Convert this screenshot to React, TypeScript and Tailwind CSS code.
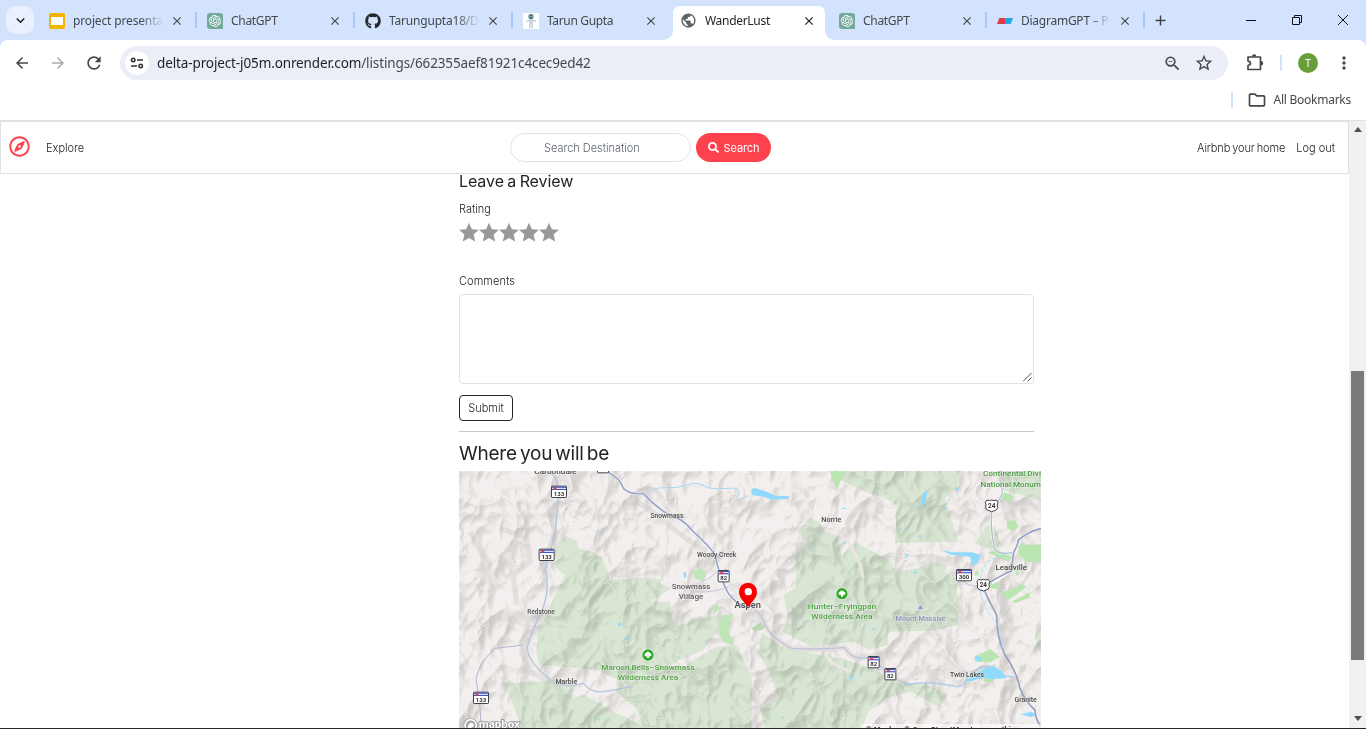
import type { ReactNode } from "react";
import {
  MdArrowBack,
  MdArrowForward,
  MdClose,
  MdMoreVert,
  MdOutlineFolder,
  MdOutlineZoomOut,
  MdRefresh,
  MdStarBorder,
  MdAdd,
  MdKeyboardArrowDown,
  MdPublic,
} from "react-icons/md";
import { FaGithub, FaRegCompass, FaSearch } from "react-icons/fa";
import { SiOpenai } from "react-icons/si";

const ui = "font-['Noto_Sans','Open_Sans',sans-serif]";

function OpenAiIcon() {
  return (
    <span className="flex size-4 items-center justify-center rounded-[3px] rounded-br-none bg-[#74aa9c] text-white">
      <SiOpenai size={12} />
    </span>
  );
}

function SlidesIcon() {
  return (
    <span className="flex size-4 items-center justify-center rounded-[2px] bg-[#f5b400]">
      <span className="h-2 w-3 bg-white" />
    </span>
  );
}

function RobotIcon() {
  return (
    <svg width="16" height="16" viewBox="0 0 16 16">
      <rect width="16" height="16" fill="#fff" />
      <circle cx="8" cy="3.5" r="2.6" fill="#4b7880" />
      <circle cx="7" cy="3.4" r=".7" fill="#9bd0d8" />
      <circle cx="9.2" cy="3.4" r=".7" fill="#9bd0d8" />
      <path d="M6.6 6.8h2.8l-.3 3.400H6.900z" fill="#dfe4e8" stroke="#a9b5bd" strokeWidth=".8" />
      <path d="M6.900 10.600v4.600M9.100 10.600v4.600M6.200 7.400 3.400 8.200M9.800 7.400l2.800.8" stroke="#a9b5bd" fill="none" />
    </svg>
  );
}

function EraserIcon() {
  return (
    <svg width="16" height="16" viewBox="0 0 16 16">
      <path d="M2.3 5H8v6H0z" fill="#dc3c46" />
      <path d="M8 5h8l-2.3 6H8z" fill="#22a7e0" />
    </svg>
  );
}

function ExtensionIcon() {
  return (
    <svg className="ml-[18px] shrink-0" width="18" height="18" viewBox="0 0 18 18">
      <path d="M2 3h12.500v12.500H2v-4q2.500-.5 2.500-2.200T2 7.100z" fill="none" stroke="currentColor" strokeWidth="1.700" strokeLinejoin="round" />
      <path d="M6 2.500a2.200 2.200 0 0 1 4.400 0zM15 7.100a2.200 2.200 0 0 1 0 4.400z" fill="currentColor" />
    </svg>
  );
}

type TabProps = {
  icon: ReactNode;
  title: string;
  active?: boolean;
  divider?: boolean;
  fade?: boolean;
  tracking?: string;
};

function Tab({ icon, title, active, divider, fade, tracking = "" }: TabProps) {
  return (
    <div className={`relative flex h-[34px] w-[158px] shrink-0 items-center pb-[5px] pl-[10px] ${active ? "text-[#1f1f1f]" : "text-[#45474a]"}`}>
      {active && (
        <svg className="absolute -left-[9px] top-0" width="170" height="34" viewBox="0 0 170 34">
          <path d="M0 34C7 34 11 30 11 24V8Q11 0 19 0H155Q163 0 163 8V24C163 30 167 34 174 34Z" fill="#fff" />
        </svg>
      )}
      <span className="relative">{icon}</span>
      <span className={`relative ml-2 w-[89px] whitespace-nowrap text-[12px] font-[450] leading-[18px] ${tracking} ${fade ? "[mask-image:linear-gradient(to_right,black_75%,transparent_102%)]" : ""}`}>
        {title}
      </span>
      <MdClose size={14} className="relative ml-[8px]" />
      {divider && <span className="absolute right-0 top-[6px] h-4 w-[2px] bg-[#a8c7fa]" />}
    </div>
  );
}

function TabStrip() {
  return (
    <div className="flex h-10 bg-[#d3e3fd] pt-[6px]">
      <div className="ml-[6px] mr-[5px] flex size-7 shrink-0 items-center justify-center rounded-[10px] bg-[#e9f1fe]">
        <MdKeyboardArrowDown size={17} className="text-[#1f1f1f]" />
      </div>
      <Tab icon={<SlidesIcon />} title="project presenta" divider fade tracking="tracking-[-0.15px]" />
      <Tab icon={<OpenAiIcon />} title="ChatGPT" divider tracking="tracking-[-0.3px]" />
      <Tab icon={<FaGithub size={16} className="text-[#24292f]" />} title="Tarungupta18/D" divider fade tracking="tracking-[-0.2px]" />
      <Tab icon={<RobotIcon />} title="Tarun Gupta" tracking="tracking-[-0.35px]" />
      <Tab icon={<MdPublic size={17} className="-ml-px text-[#5f6368]" />} title="WanderLust" active tracking="tracking-[-0.3px]" />
      <Tab icon={<OpenAiIcon />} title="ChatGPT" divider tracking="tracking-[-0.3px]" />
      <Tab icon={<EraserIcon />} title="DiagramGPT – P" divider fade tracking="tracking-[-0.25px]" />
      <MdAdd size={17} className="ml-[7px] mt-[6px] shrink-0 text-[#3c4043]" />
      <svg className="ml-auto mr-[16px] mt-[8px] shrink-0" width="104" height="12" viewBox="0 0 104 12" fill="none" stroke="#111" strokeWidth="1">
        <path d="M0 6.5h10" />
        <path d="M46.5 3.5h7v7h-7zM48.5 3.5v-2h7v7h-2" />
        <path d="m92 1 10 10M102 1 92 11" />
      </svg>
    </div>
  );
}

function Toolbar() {
  return (
    <div className="bg-[#d3e3fd]">
      <div className="flex h-[46px] items-center rounded-t-lg bg-white text-[#45474a]">
        <MdArrowBack size={18} className="ml-[13px]" />
        <MdArrowForward size={18} className="ml-[18px] text-[#a9abad]" />
        <MdRefresh size={20} className="ml-[17px]" />
        <div className="ml-[16px] flex h-[34px] w-[1108px] items-center rounded-full bg-[#ebeef7] pl-[5px]">
          <span className="flex size-6 items-center justify-center rounded-full bg-white">
            <svg width="14" height="12" viewBox="0 0 14 12" fill="none" stroke="#303134" strokeWidth="1.6">
              <circle cx="3.2" cy="3" r="1.7" />
              <path d="M7 3h6M1 9h6" />
              <circle cx="10.7" cy="9" r="1.7" />
            </svg>
          </span>
          <span className="ml-[8px] whitespace-nowrap text-[13.5px] leading-5 tracking-[-0.12px] text-[#45474a]">
            <span className="text-[#1f1f1f]">delta-project-j05m.onrender.com</span>/listings/662355aef81921c4cec9ed42
          </span>
          <MdOutlineZoomOut size={19} className="ml-auto" />
          <MdStarBorder size={20} className="ml-[12px] mr-[14px]" />
        </div>
        <ExtensionIcon />
        <span className="ml-[16px] h-4 w-[2px] bg-[#d3e3fd]" />
        <span className="ml-[16px] flex size-5 items-center justify-center rounded-full bg-[#689f38] text-[10px] text-white">T</span>
        <MdMoreVert size={20} className="ml-[16px]" />
      </div>
    </div>
  );
}

function BookmarksBar() {
  return (
    <div className="flex h-[35px] items-center justify-end border-b border-[#dfe1e5] bg-white pb-[7px] pr-[15px] text-[#45474a]">
      <span className="h-4 w-[2px] bg-[#d3e3fd]" />
      <MdOutlineFolder size={20} className="ml-[14px]" />
      <span className="ml-[6px] whitespace-nowrap text-[12px] font-[450] tracking-[-0.25px]">All Bookmarks</span>
    </div>
  );
}

function Navbar() {
  return (
    <header className="flex h-[53px] items-center border border-[#dee2e6] text-[11px] text-[#222]">
      <FaRegCompass size={21} className="-mt-[3px] ml-[8px] shrink-0 text-[#fe424d]" />
      <span className="ml-[16px] w-[464px] pt-[2px]">Explore</span>
      <span className="flex h-[29px] w-[181px] items-center rounded-full border border-[#dee2e6] pl-[33px] pt-px tracking-[-0.02px] text-[#5c646b]">
        Search Destination
      </span>
      <span className="ml-[5px] flex h-[29px] w-[75px] items-center justify-center gap-[5px] rounded-full bg-[#fe424d] font-normal text-white">
        <FaSearch size={11} />
        <span className="pt-px tracking-[-0.1px]">Search</span>
      </span>
      <span className="ml-auto whitespace-nowrap pt-[2px] tracking-[-0.1px] [word-spacing:-1px]">Airbnb your home</span>
      <span className="ml-[11px] mr-[13px] whitespace-nowrap pt-[2px]">Log out</span>
    </header>
  );
}

function Stars() {
  return (
    <svg className="mt-[5px] block" width="100" height="20" viewBox="0 0 100 20" fill="#999">
      {[0, 20, 40, 60, 80].map((x) => (
        <path key={x} transform={`translate(${x} .5)`} d="M10 .2l2.900 6.500 7 .6-5.300 4.700 1.700 7.100L10 15.500 3.700 19.100l1.700-7.100L.1 7.300l7-.6z" />
      ))}
    </svg>
  );
}

type LabelProps = { x: number; y: number; w: number; text: string; size?: number; fill?: string };

function MapLabel({ x, y, w, text, size = 21, fill = "#4a4a4d" }: LabelProps) {
  return (
    <text x={x} y={y} textLength={w} lengthAdjust="spacingAndGlyphs" textAnchor="middle" fontSize={size} fill={fill} stroke="#f6f3f2" strokeWidth="3" strokeOpacity=".6" paintOrder="stroke" fontWeight="500">
      {text}
    </text>
  );
}

function StateShield({ x, y, n }: { x: number; y: number; n: string }) {
  const w = n.length > 2 ? 48 : 36;
  return (
    <g transform={`translate(${x - w / 2} ${y - 18})`}>
      <rect x="1.500" y="1.500" width={w - 3} height="34" rx="2" fill="#fff" stroke="#3d3f4a" strokeWidth="3" />
      <rect x="3" y="3" width={w - 6} height="10" fill="#4257c6" />
      <path d={`M3 8h${w - 6}`} stroke="#fff" strokeWidth="3" />
      <circle cx="12" cy="8" r="4.500" fill="#e4443c" />
      <text x={w / 2} y="31" textAnchor="middle" fontSize="18" fontWeight="700" fill="#333">{n}</text>
    </g>
  );
}

function UsShield({ x, y }: { x: number; y: number }) {
  return (
    <g transform={`translate(${x} ${y})`}>
      <path d="M-14-17Q-7-13 0-17 7-13 14-17L19-10Q15-2 18 6 16 14 8 15L0 18-8 15Q-16 14-18 6-15-2-19-10Z" fill="#fff" stroke="#3d3f4a" strokeWidth="3" />
      <text y="7" textAnchor="middle" fontSize="19" fontWeight="700" fill="#333">24</text>
    </g>
  );
}

function ParkPin({ x, y }: { x: number; y: number }) {
  return (
    <g transform={`translate(${x} ${y})`}>
      <circle r="19" fill="#fff" opacity=".7" />
      <circle r="17" fill="#2eab27" />
      <path d="M-10 2A6 6 0 0 1-6-6 7 7 0 0 1 6-6 6 6 0 0 1 10 2Q6 5 3 4V9H-3V4Q-6 5-10 2Z" fill="#fff" />
    </g>
  );
}

function MapView() {
  return (
    <svg className="block font-['Roboto','Noto_Sans',sans-serif]" width="582" height="257" viewBox="459 471 582 257">
      <defs>
        <filter id="relief" x="0" y="0" width="100%" height="100%" colorInterpolationFilters="sRGB">
          <feTurbulence type="turbulence" baseFrequency="0.024 0.018" numOctaves="3" seed="11" result="n" />
          <feColorMatrix in="n" type="matrix" values="0 0 0 0 0  0 0 0 0 0  0 0 0 0 0  -1.300 0 0 0 1" result="h" />
          <feDiffuseLighting in="h" surfaceScale="10" lightingColor="#fff" result="l">
            <feDistantLight azimuth="225" elevation="58" />
          </feDiffuseLighting>
          <feColorMatrix in="l" type="matrix" values=".19 0 0 0 .835  0 .19 0 0 .835  0 0 .19 0 .832  0 0 0 0 1" />
        </filter>
      </defs>
      <rect x="459" y="471" width="582" height="257" fill="#f3efee" />

      <g fill="#d9e6d4">
        <g transform="translate(450 465) scale(.33333)">
          <path d="M330 225 350 213 380 228 385 250 430 262 455 280 475 320 478 345 590 338 630 342 632 358 665 370 600 410 660 410 665 450 680 485 730 465 800 450 810 480 790 510 760 555 690 585 650 610 500 642 440 615 350 605 270 600 258 560 265 500 320 380 345 330 318 310 316 260Z" />
          <path d="M160 655 370 645 365 700 400 690 450 715 500 745 545 765 590 792H215L190 720Z" />
          <path d="M500 640 600 600 700 610 720 590 800 545 860 540 885 600 905 640V792H580L560 730 500 682Z" />
        </g>
        <g transform="translate(745 465) scale(.33333)">
          <path d="M250 18H640L635 70 600 100 640 230 450 235 455 120 420 100 360 80 290 45Z" />
          <path d="M160 200 195 155 230 180 240 200 275 210 290 270 330 230 440 290 450 320 520 310 560 290 605 300 600 320 635 345 640 480 560 497 430 500 430 540 370 555 330 530 200 545 110 500 130 460 115 390 150 370 155 310 150 280 185 230Z" />
          <path d="M50 500 100 540 200 565 290 580 380 610 430 640 560 665 610 690 580 725 500 680 420 700 370 740 350 792H60L45 730 100 700 80 640 40 560Z" />
          <path d="M765 18H888V105L830 90 775 75ZM690 235 725 180 750 185 765 230 755 262ZM888 480 872 510 878 550 888 570Z" />
        </g>
      </g>

      <rect x="459" y="471" width="582" height="257" filter="url(#relief)" className="mix-blend-multiply" />

      <g transform="translate(450 465) scale(.33333)" fill="none" strokeLinejoin="round">
        <g stroke="#c9c6c2" strokeWidth="16" opacity=".35">
          <path d="M150 190 230 220 240 290 190 330 200 420M235 460 215 560 240 620 300 650M540 95 620 150 700 215 770 260M60 200 120 300 90 380" />
        </g>
        <g fill="#c0e5b8">
          <path d="M725 318 755 310 770 325 760 350 735 340ZM808 470 820 450 850 448 845 465 835 500 852 540 820 532 805 505ZM792 425 800 414 808 430 790 452ZM478 30 498 34 490 45Z" />
        </g>
        <g fill="#92d9fb">
          <path d="m700 322 7 0 2 14-7 3ZM505 474l8 0-1 9-8-2ZM526 512l10 4-4 8-8-3ZM454 203l6 2-3 5ZM680 575h9v5h-9ZM441 760h8v5h-8Z" />
        </g>
        <path d="M590 85Q620 65 650 68T710 60 760 62 830 70 865 90 895 92" stroke="#a7d8f4" strokeWidth="3" />
        <path d="M300 22Q328 40 325 90T315 210Q300 260 285 315 295 350 290 385T265 460 230 550Q240 595 290 635T400 655Q425 685 460 680T545 665" stroke="#b2c4df" strokeWidth="4" />
        <path d="M92 790Q95 740 78 640 90 590 135 550 180 545 220 540" stroke="#b0b7d1" strokeWidth="3" />
        <path d="M474 22Q510 40 520 70 540 90 580 85 610 120 650 145 700 160 730 200 780 245 795 270 810 340 835 385 860 420 895 430" stroke="#fff" strokeWidth="8" />
        <path d="M474 22Q510 40 520 70 540 90 580 85 610 120 650 145 700 160 730 200 780 245 795 270 810 340 835 385 860 420 895 430" stroke="#9ba3c7" strokeWidth="5" />
        <path d="M740 355Q770 350 800 320M735 380Q790 385 835 365" stroke="#c3c7dc" strokeWidth="3" />
      </g>

      <g transform="translate(745 465) scale(.33333)" fill="none" strokeLinejoin="round">
        <g fill="#b9e6b0">
          <path d="M255 22 300 18 290 40 275 75ZM770 92 780 82 808 95 800 108 770 105ZM785 168 810 165 822 185 805 198 788 190ZM820 240 888 238V290L850 292 820 270ZM728 262 760 255 800 275 790 290ZM728 350 760 352 765 375 740 370ZM768 385 830 357 845 366 790 405ZM800 410 858 380 850 400 812 414ZM690 575 735 552 765 575 735 592 700 590ZM715 640 750 640 745 652 715 650ZM812 310 825 325 815 333ZM690 320 700 315 700 332 688 330Z" />
          <path fill="#bad9b2" d="M20 488 50 470 65 482 50 496 25 497Z" />
        </g>
        <g fill="#92dafc">
          <path d="M18 75 28 68 70 82 90 92 135 94 130 101 80 104 55 95 20 90ZM548 76 542 110 530 125 526 118 536 82ZM588 255 620 262 680 262 708 270 700 292 684 304 674 275 620 270ZM690 575 700 572 712 580 705 590 690 588ZM710 615 745 603 770 618 785 640 740 642 715 638 680 648 655 650 680 635ZM825 748 860 740 873 750 860 757ZM478 263 490 270 485 278ZM505 320h9v7h-9ZM295 228l8 4-3 7ZM315 634h9v9h-9ZM383 489h7v6h-7ZM522 210h7v8h-7ZM465 190h6v5h-6ZM596 126h6v5h-6ZM108 755h10v5h-10ZM292 128h9v4h-9ZM635 68h7v7h-7Z" />
        </g>
        <path d="M0 430Q50 435 60 480 80 520 140 550 210 555 300 548 320 590 380 575 430 635 480 655" stroke="#ddd9d6" strokeWidth="18" opacity=".6" />
        <path d="M275 200Q340 250 355 340M240 560Q250 600 320 620" stroke="#ebe6e3" strokeWidth="8" />
        <path d="M30 435Q55 455 60 480 80 520 140 550 210 555 300 548 320 590 380 575 430 635 480 655" stroke="#bdc3da" strokeWidth="4" />
        <path d="M480 660Q550 645 635 665 660 660 660 650 690 600 740 605M780 632 810 638" stroke="#a6cdea" strokeWidth="4" />
        <path d="M765 45Q775 80 770 90L740 140Q735 180 748 250 760 270 800 263M740 355 800 318 805 265Q820 235 820 225 850 200 888 190" stroke="#fff" strokeWidth="7" />
        <path d="M765 45Q775 80 770 90L740 140Q735 180 748 250 760 270 800 263" stroke="#b3b8d3" strokeWidth="4" />
        <path d="M735 352Q770 330 800 318L805 265Q820 235 820 225 850 200 888 190M718 375Q730 405 755 450 755 520 780 570 815 620 825 670 840 710 870 735 870 760 888 785" stroke="#989fc4" strokeWidth="5" />
        <path d="M800 265Q740 270 715 310 700 340 708 390 720 430 750 470L775 510 770 550" stroke="#a8dcf7" strokeWidth="3" strokeDasharray="12 5" />
        <path d="M655 345Q665 365 700 362M762 348 766 382" stroke="#c7cce0" strokeWidth="4" />
      </g>

      <g transform="translate(450 465) scale(.33333)">
        <StateShield x={327} y={80} n="133" />
        <StateShield x={290} y={269} n="133" />
        <StateShield x={93} y={698} n="133" />
        <StateShield x={821} y={333} n="82" />
        <StateShield x={459} y={6} n="82" />
        <MapLabel x={316} y={26} w={126} text="Carbondale" size={21} />
        <MapLabel x={651} y={158} w={99} text="Snowmass" size={20} />
        <MapLabel x={800} y={275} w={118} text="Woody Creek" size={20} />
        <MapLabel x={723} y={373} w={116} text="Snowmass" size={23} fill="#5c5c60" />
        <MapLabel x={723} y={401} w={74} text="Village" size={23} fill="#5c5c60" />
        <MapLabel x={273} y={447} w={82} text="Redstone" size={19} />
        <MapLabel x={349} y={656} w={65} text="Marble" size={20} />
        <MapLabel x={594} y={615} w={280} text="Maroon Bells–Snowmass" size={23} fill="#4da345" />
        <MapLabel x={594} y={645} w={182} text="Wilderness Area" size={23} fill="#4da345" />
        <ParkPin x={594} y={570} />
        <g transform="translate(62 781)">
          <circle r="17" fill="none" stroke="#8f8e8e" strokeWidth="9" />
          <circle r="17" fill="#a8a6a6" stroke="#fff" strokeWidth="5" />
          <path d="M-8 8Q-10-3 0-8 10-8 9 2 4 10-8 8Z" fill="#fff" />
        </g>
        <text x="86" y="789" textLength="124" lengthAdjust="spacingAndGlyphs" fontSize="30" fontWeight="700" fill="#fff" stroke="#8b8a8a" strokeWidth="4" paintOrder="stroke">mapbox</text>
      </g>

      <g transform="translate(745 465) scale(.33333)">
        <StateShield x={657} y={330} n="300" />
        <StateShield x={386} y={591} n="82" />
        <StateShield x={436} y={627} n="82" />
        <UsShield x={740} y={122} />
        <UsShield x={715} y={360} />
        <MapLabel x={259} y={170} w={60} text="Norrie" size={20} />
        <MapLabel x={799} y={314} w={95} text="Leadville" size={24} />
        <MapLabel x={666} y={635} w={102} text="Twin Lakes" size={21} />
        <MapLabel x={842} y={711} w={67} text="Granite" size={20} />
        <MapLabel x={8} y={430} w={79} text="Aspen" size={26} />
        <MapLabel x={291} y={431} w={205} text="Hunter–Fryingpan" size={23} fill="#4da345" />
        <MapLabel x={291} y={461} w={184} text="Wilderness Area" size={23} fill="#4da345" />
        <MapLabel x={527} y={467} w={151} text="Mount Massive" size={22} fill="#8394b5" />
        <MapLabel x={801} y={34} w={174} text="Continental Divi" size={23} fill="#4c9a44" />
        <MapLabel x={797} y={65} w={181} text="National Monum" size={23} fill="#4c9a44" />
        <path d="m515 434 11-17 12 17Z" fill="#8fa0c2" stroke="#fff" strokeWidth="2" />
        <ParkPin x={291} y={386} />
        <path d="M9 426C-3 410-18 398-18 380A27 27 0 0 1 36 380C36 398 21 410 9 426Z" fill="#f90000" />
        <circle cx="10" cy="380" r="11" fill="#fff" />
        <rect x="347" y="777" width="541" height="15" fill="#fff" opacity=".6" />
        <text x="362" y="802" textLength="500" fontSize="22" fontWeight="700" fill="#333">© Mapbox © OpenStreetMap Improve this map</text>
      </g>
    </svg>
  );
}

function Listing() {
  return (
    <main className="ml-[459px] flex w-[582px] flex-col text-[#222529]">
      <h4 className="mt-[-3px] text-[16px] font-normal leading-[20px] tracking-[-0.08px] [word-spacing:-1px]">Leave a Review</h4>
      <span className="mt-[10px] text-[11px] leading-4 text-[#222]">Rating</span>
      <Stars />
      <span className="mt-[31px] text-[11px] leading-4 tracking-[0.06px] text-[#222]">Comments</span>
      <div className="mt-[5px] flex h-[90px] w-[575px] items-end justify-end rounded-[4px] border border-[#dee2e6] p-px">
        <svg width="9" height="9" viewBox="0 0 9 9" stroke="#4b4b4b" strokeWidth="1">
          <path d="M0 8.500 8.500 0M4.500 8.500l4-4" />
        </svg>
      </div>
      <button className="mt-[11px] h-[26px] w-[54px] rounded-[4px] border border-[#212529] text-[11px] leading-none text-[#222]">Submit</button>
      <div className="mt-[10px] h-px w-[575px] bg-[#c8c9ca]" />
      <h3 className="mb-[4px] mt-[9px] text-[19px] font-normal leading-[26px] tracking-[-0.23px] [word-spacing:-2px]">Where you will be</h3>
      <MapView />
    </main>
  );
}

export default function App() {
  return (
    <div className={`flex h-[729px] w-[1366px] flex-col overflow-hidden bg-white ${ui}`}>
      <TabStrip />
      <Toolbar />
      <BookmarksBar />
      <div className="flex h-[607px] overflow-hidden">
        <div className="w-[1349px] shrink-0 font-['Inter','Liberation_Sans',sans-serif] font-light">
          <Navbar />
          <Listing />
        </div>
        <div className="flex w-[17px] flex-col items-center bg-[#f1f1f1]">
          <svg className="mt-[6px]" width="8" height="5" viewBox="0 0 8 5"><path d="M4 0 8 5H0Z" fill="#505050" /></svg>
          <div className="mt-[239px] h-[289px] w-[13px] bg-[#7a7a7a]" />
          <svg className="mb-[7px] mt-auto" width="8" height="5" viewBox="0 0 8 5"><path d="M0 0H8L4 5Z" fill="#505050" /></svg>
        </div>
      </div>
      <div className="h-px bg-[#26272a]" />
    </div>
  );
}
